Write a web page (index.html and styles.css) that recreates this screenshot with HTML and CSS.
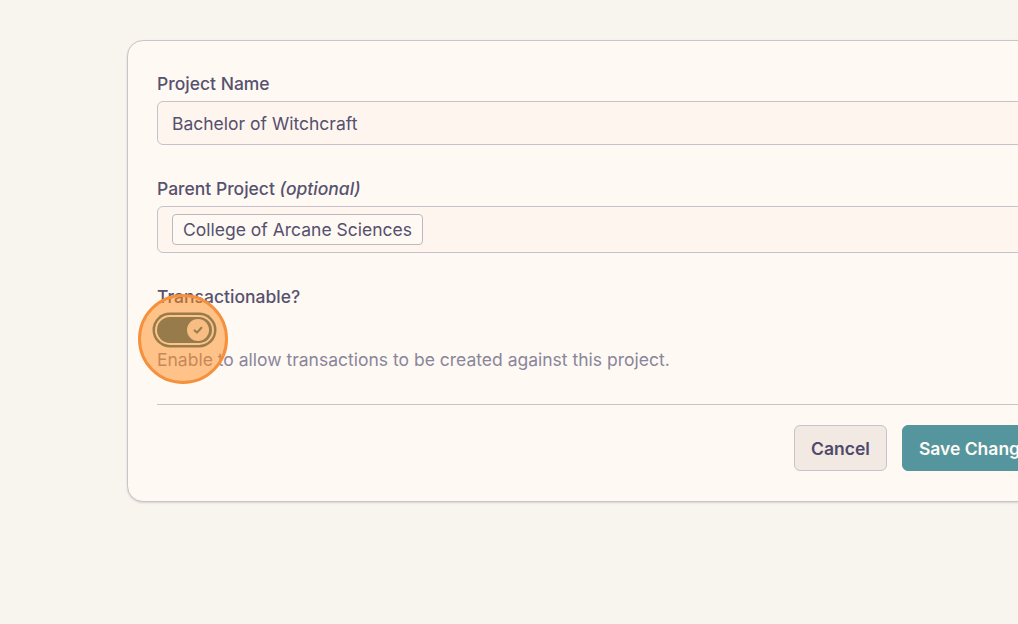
FILE: index.html
```html
<!DOCTYPE html>
<html>
<head>
<meta charset="utf-8">
<link rel="stylesheet" href="styles.css">
</head>
<body>
<div class="page">
  <form class="card">
    <div class="field">
      <label class="label">Project Name</label>
      <div class="input">Bachelor of Witchcraft</div>
    </div>
    <div class="field">
      <label class="label">Parent Project <em>(optional)</em></label>
      <div class="input input-tags"><span class="chip">College of Arcane Sciences</span></div>
    </div>
    <div class="field field-toggle">
      <label class="label">Transactionable?</label>
      <div class="toggle-wrap">
        <span class="toggle"><span class="knob"><svg viewBox="0 0 12 12" width="12" height="12"><path d="M2.6 6.4 L5 8.6 L9.4 3.8" fill="none" stroke="currentColor" stroke-width="2" stroke-linecap="round" stroke-linejoin="round"/></svg></span></span>
      </div>
      <p class="help">Enable to allow transactions to be created against this project.</p>
      <span class="click-dot"></span>
    </div>
    <hr class="divider">
    <div class="actions">
      <button type="button" class="btn btn-cancel">Cancel</button>
      <button type="button" class="btn btn-save">Save Changes</button>
    </div>
  </form>
</div>
</body>
</html>
```
FILE: styles.css
```css
* { box-sizing: border-box; }
html, body { margin: 0; padding: 0; }
body {
  background: #f8f4ee;
  font-family: Inter, "Noto Sans", sans-serif;
  color: #55506e;
  overflow: hidden;
  width: 1018px;
  height: 624px;
}
.page {
  padding: 40px 0 0 127px;
}
.card {
  width: 961px;
  background: #fef9f3;
  border: 1px solid #c9c4cb;
  border-radius: 16px;
  box-shadow: 0 1px 2px rgba(60, 50, 70, 0.18);
  padding: 30px 30px 30px 29px;
}
.field { display: flex; flex-direction: column; }
.field + .field { margin-top: 31px; }
.label {
  font-size: 17.5px;
  line-height: 26px;
  font-weight: 500;
  color: #57526f;
  margin-bottom: 4px;
}
.label em { font-style: italic; }
.input {
  height: 44px;
  border: 1px solid #c6c1ca;
  border-radius: 6px;
  background: #fdf5ee;
  padding: 0 14px;
  display: flex;
  align-items: center;
  font-size: 17.5px;
  color: #55506e;
}
.input-tags { height: 47px; padding: 0 14px; }
.chip {
  display: inline-flex;
  align-items: center;
  height: 31px;
  padding: 0 10px;
  border: 1px solid #bdb8c2;
  border-radius: 4px;
  background: #fef9f3;
  font-size: 17.5px;
  color: #55506e;
}
.field-toggle { position: relative; }
.field-toggle .label { margin-bottom: 0; }
.toggle-wrap { display: flex; margin-top: 7px; }
.toggle {
  width: 55px;
  height: 26px;
  border-radius: 13px;
  background: #2f6b78;
  box-shadow: 0 0 0 2px #fef9f3, 0 0 0 4.5px #2f6b78;
  display: flex;
  align-items: center;
  justify-content: flex-end;
  padding: 0 3px;
}
.knob {
  width: 22px;
  height: 22px;
  border-radius: 50%;
  background: #efefe8;
  color: #2f6b78;
  display: flex;
  align-items: center;
  justify-content: center;
}
.help {
  margin: 5px 0 0;
  font-size: 17.5px;
  line-height: 24px;
  color: #8a859b;
}
.click-dot {
  position: absolute;
  left: -19px;
  top: 10px;
  width: 90px;
  height: 90px;
  border-radius: 50%;
  background: rgba(255, 140, 30, 0.5);
  border: 3px solid #f5913c;
}
.divider {
  border: 0;
  border-top: 1px solid #c9c4cb;
  margin: 32px 0 20px;
}
.actions {
  display: flex;
  justify-content: flex-end;
  gap: 15px;
}
.btn {
  height: 46px;
  border-radius: 6px;
  font-family: Inter, "Noto Sans", sans-serif;
  font-size: 17.5px;
  font-weight: 600;
  padding: 0 16px;
}
.btn-cancel {
  background: #f1e9e2;
  border: 1px solid #c8c2c9;
  color: #4f4a6b;
}
.btn-save {
  background: #55969e;
  border: 1px solid #55969e;
  color: #fefaf5;
}
```
